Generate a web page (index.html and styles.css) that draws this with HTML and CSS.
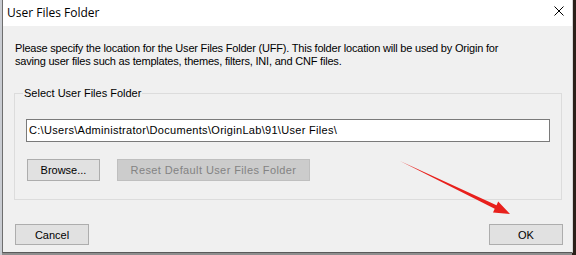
FILE: index.html
```html
<!DOCTYPE html>
<html lang="en">
<head>
	<meta http-equiv="Content-Type" content="text/html; charset=UTF-8">
	<title>User Files Folder</title>
	<link rel="stylesheet" href="styles.css">
</head>
<body>
<div class="dialog">
  <div class="title-bar">
    <span class="title">User Files Folder</span>
    <svg class="close" width="10" height="10" viewBox="0 0 10 10">
      <path d="M0.5 0.5 L9.5 9.5 M9.5 0.5 L0.5 9.5" stroke="#000" stroke-width="1" fill="none"/>
    </svg>
  </div>
  <div class="dialog-body">
    <p class="intro">Please specify the location for the User Files Folder (UFF). This folder location will be used by Origin for<br>saving user files such as templates, themes, filters, INI, and CNF files.</p>
    <div class="group">
      <span class="group-label">Select User Files Folder</span>
      <div class="path-box">C:\Users\Administrator\Documents\OriginLab\91\User Files\</div>
      <div class="group-buttons">
        <div class="btn btn-browse">Browse...</div>
        <div class="btn btn-reset">Reset Default User Files Folder</div>
      </div>
    </div>
    <div class="footer">
      <div class="btn btn-foot">Cancel</div>
      <div class="btn btn-foot">OK</div>
    </div>
  </div>
</div>

<!-- annotation arrow -->
<svg class="arrow" width="576" height="255" viewBox="0 0 576 255">
  <polygon points="400,161 496.5,205.2 498.2,201.6 510,214 493,212.4 494.7,208.8" fill="#e8201c"/>
</svg>
</body>
</html>
```

FILE: styles.css
```css
html,
body {
  width: 576px;
  height: 255px;
}
body {
  margin: 0;
  overflow: hidden;
  position: relative;
  background: linear-gradient(to right, #c9ccd2 0 2px, #8e8e8e 2px 572px, #2b2019 572px);
  font-family: "Liberation Sans", Arial, sans-serif;
  font-size: 11px;
  color: #000;
}
.dialog {
  width: 569px;
  height: 252px;
  margin-left: 2px;
  border-left: 1px solid #6e6e6e;
  border-right: 1px solid #d6d6d6;
  border-bottom: 1px solid #5a5a5a;
  display: flex;
  flex-direction: column;
}
.title-bar {
  height: 26px;
  background: #fff;
  display: flex;
  align-items: center;
  padding: 0 8px 0 4px;
}
.title {
  flex: 1;
  font-family: "Open Sans", "Noto Sans", sans-serif;
  font-size: 12px;
  padding-bottom: 2px;
}
.close {
  margin-top: -4px;
}
.dialog-body {
  flex: 1;
  background: #f0f0f0;
  padding: 16px 9px 0 12px;
}
.intro {
  margin: 0;
  line-height: 13px;
  letter-spacing: -0.2px;
}
.group {
  margin: 25px 1px 0 -1px;
  border: 1px solid #dcdcdc;
  padding: 0 0 18px 0;
}
.group-label {
  display: block;
  width: fit-content;
  margin: -7px 0 0 8px;
  padding: 0 1px;
  line-height: 13px;
  background: #f0f0f0;
}
.path-box {
  margin: 19px 0 0 11px;
  width: 520px;
  height: 21px;
  line-height: 21px;
  padding-left: 2px;
  box-sizing: content-box;
  background: #fff;
  border: 1px solid #7a7a7a;
  white-space: nowrap;
  letter-spacing: 0.3px;
}
.group-buttons {
  display: flex;
  gap: 17px;
  margin: 17px 0 0 12px;
}
.btn {
  box-sizing: border-box;
  display: flex;
  align-items: center;
  justify-content: center;
  background: #e1e1e1;
  border: 1px solid #adadad;
}
.btn-browse {
  width: 73px;
  height: 22px;
}
.btn-reset {
  width: 193px;
  height: 22px;
  background: #cccccc;
  border-color: #bfbfbf;
  color: #838383;
  letter-spacing: 0.4px;
}
.footer {
  display: flex;
  justify-content: space-between;
  margin-top: 24px;
}
.btn-foot {
  width: 74px;
  height: 21px;
}
.arrow {
  position: absolute;
  left: 0;
  top: 0;
  pointer-events: none;
}
```
